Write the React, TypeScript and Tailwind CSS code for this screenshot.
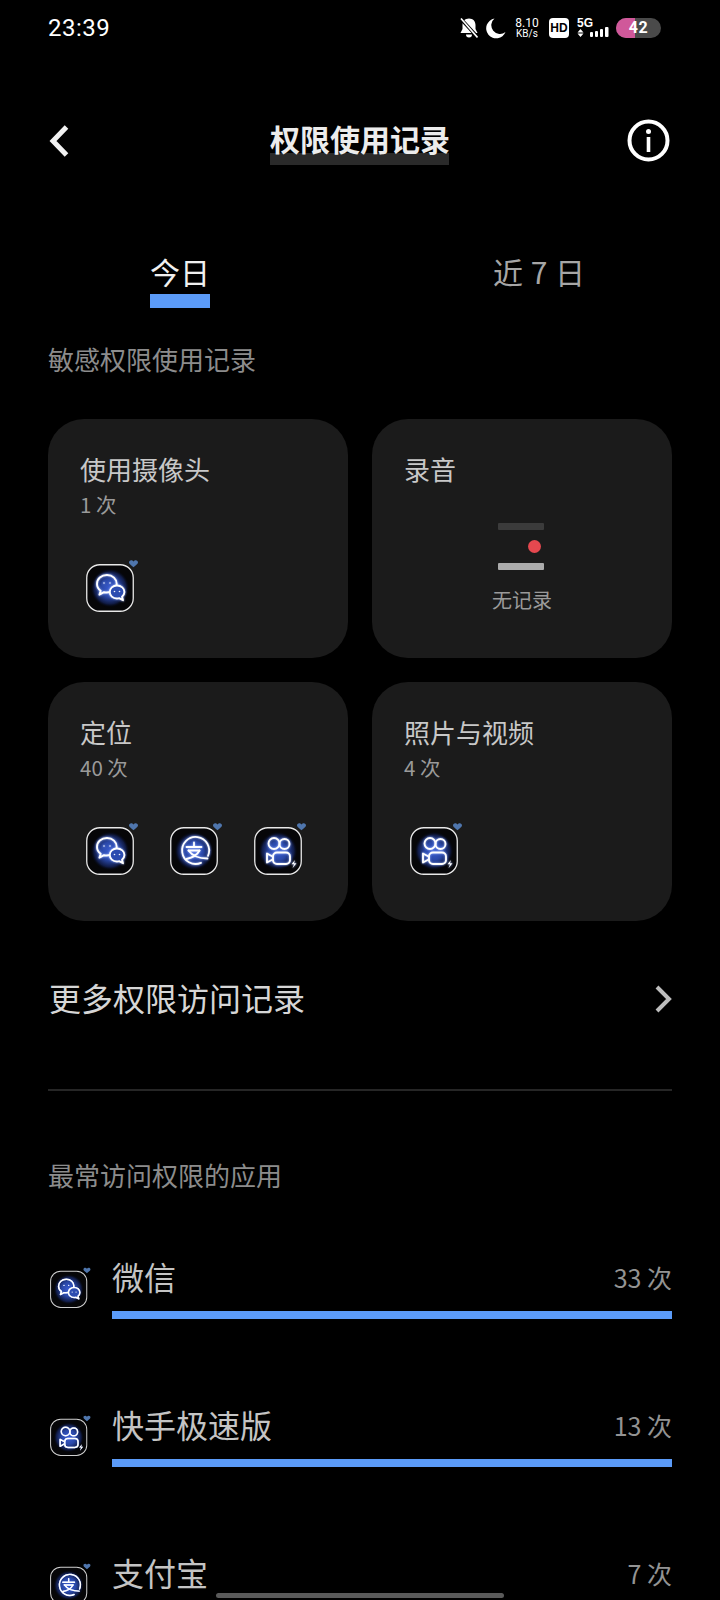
import React from 'react';

const cjk = { fontFamily: '"Noto Sans CJK SC", "Noto Sans", sans-serif' };

type AppKind = 'wechat' | 'alipay' | 'kuaishou';

// glyphs sit in a 48 unit box, stroked white over a blue glow
const AppGlyph = ({ kind }: { kind: AppKind }) => {
  if (kind === 'wechat') {
    return (
      <>
        <path d="M21 11c-5.700 0-10 3.900-10 8.900 0 2.800 1.400 5.200 3.700 6.800l-1.300 4 4.600-2.500c.9.200 1.800.3 2.700.3 5.700 0 10-3.900 10-8.700S26.700 11 21 11z" fill="none" stroke="#fff" strokeWidth="1.900" strokeLinejoin="round" />
        <path d="M31 21.500c-4.100 0-7.200 2.900-7.200 6.500s3.100 6.500 7.200 6.500c.8 0 1.500-.1 2.200-.3l3.800 2-1-3.400c1.500-1.200 2.400-2.900 2.400-4.800 0-3.600-3.300-6.500-7.400-6.500z" fill="#2c4cb0" stroke="#fff" strokeWidth="1.900" strokeLinejoin="round" />
        <circle cx="18" cy="19" r="0.800" fill="#eef3ff" />
        <circle cx="24" cy="19" r="0.800" fill="#eef3ff" />
        <circle cx="28.500" cy="27.500" r="0.800" fill="#eef3ff" />
        <circle cx="33.500" cy="27.500" r="0.800" fill="#eef3ff" />
      </>
    );
  }
  if (kind === 'alipay') {
    return (
      <>
        <path d="M31 35.800a13.500 13.500 0 1 1 7-7" fill="none" stroke="#fff" strokeWidth="1.800" strokeLinecap="round" />
        <path d="M16.500 20h15M24 15.500v4.500M29.500 23.500c-2 4-6 7-13 8.500M18.500 23.500c3.500 5 10 8 19 8" fill="none" stroke="#fff" strokeWidth="1.800" strokeLinecap="round" />
        <path d="M18.500 23.500h11" fill="none" stroke="#fff" strokeWidth="1.800" strokeLinecap="round" />
      </>
    );
  }
  return (
    <>
      <circle cx="20" cy="16.500" r="5.500" fill="none" stroke="#fff" strokeWidth="1.900" />
      <circle cx="30.500" cy="17" r="5" fill="none" stroke="#fff" strokeWidth="1.900" />
      <rect x="19" y="25.500" width="17" height="11.500" rx="4" fill="none" stroke="#fff" strokeWidth="1.900" />
      <path d="M18.500 29.500l-5.500-3v9l5.500-3" fill="none" stroke="#fff" strokeWidth="1.900" strokeLinejoin="round" />
      <path d="M41 33l-3.500 4.200h2.500l-1.500 4 4-5h-2.500z" fill="#fff" />
    </>
  );
};

const AppIcon = ({ kind, size = 48 }: { kind: AppKind; size?: number }) => (
  <svg width={size + 6} height={size + 6} viewBox="0 -6 54 54" className="block shrink-0">
    <defs>
      <radialGradient id={`glow-${kind}`} cx="50%" cy="50%" r="50%">
        <stop offset="0%" stopColor="#3a5cd0" />
        <stop offset="45%" stopColor="#2a48a8" />
        <stop offset="80%" stopColor="#101b45" />
        <stop offset="100%" stopColor="#000" stopOpacity="0" />
      </radialGradient>
    </defs>
    <rect x="0.750" y="0.750" width="46.500" height="46.500" rx="13" fill="#060608" stroke={size < 48 ? '#cfcfcf' : '#e8e8e8'} strokeWidth="1.300" />
    <circle cx="24" cy="24" r="20" fill={`url(#glow-${kind})`} />
    <g className="drop-shadow-[0_0_1px_#9db6ff]">
      <AppGlyph kind={kind} />
    </g>
    <path d="M47.500 -2.500c-1.500-2.400-4.800-1.300-4.500 1 .2 1.600 2.500 3.100 4.500 4.700 2-1.600 4.300-3.100 4.500-4.700.3-2.300-3-3.400-4.500-1z" fill="#4f76ad" />
  </svg>
);

const StatusBar = () => (
  <div className="h-[56px] pl-[48px] pr-[59px] flex items-center justify-between text-white">
    <span className="text-[24px] tracking-[0.5px]" style={{ fontFamily: 'Roboto, sans-serif' }}>23:39</span>
    <div className="flex items-center">
      {/* muted bell */}
      <svg width="18" height="20" viewBox="0 0 18 20">
        <path d="M9 0.500c-4 0-6.500 2.800-6.500 6.500v4L0.500 15h17l-2-4V7C15.500 3.300 13 .5 9 .5z" fill="#fff" />
        <path d="M6 16.500a3 3 0 0 0 6 0z" fill="#fff" />
        <path d="M0 0l18 19.500" stroke="#000" strokeWidth="3.500" />
        <path d="M1 0.500l16.500 19" stroke="#fff" strokeWidth="1.600" />
      </svg>
      {/* moon */}
      <svg width="21" height="21" viewBox="0 0 21 21" className="ml-[7px]">
        <path d="M9.500 0.500a10 10 0 1 0 11 13.500 8.500 8.500 0 0 1-11-13.500z" fill="#fff" />
      </svg>
      <div className="ml-[8px] w-[26px] flex flex-col items-center leading-none text-white" style={{ fontFamily: 'Roboto, sans-serif' }}>
        <span className="text-[12px] leading-[12px]">8.10</span>
        <span className="text-[10px] leading-[10px]">KB/s</span>
      </div>
      <div className="ml-[9px] w-[20px] h-[20px] rounded-[4px] bg-white flex items-center justify-center">
        <span className="text-[12px] font-bold text-black leading-none" style={{ fontFamily: '"Liberation Sans", sans-serif' }}>HD</span>
      </div>
      <div className="ml-[8px] flex flex-col w-[32px] h-[20px] relative">
        <span className="text-[12px] leading-[11px] font-bold" style={{ fontFamily: '"Liberation Sans", sans-serif' }}>5G</span>
        {/* data arrows and signal strength bars */}
        <svg width="32" height="20" viewBox="0 0 32 20" className="absolute left-0 top-0">
          <path d="M0.500 14.500l3-3.500 3 3.500zM0.500 15.500l3 3.500 3-3.500z" fill="#fff" />
          <rect x="13" y="14" width="3" height="5" rx="1" fill="#fff" />
          <rect x="18" y="13" width="3" height="6" rx="1" fill="#fff" />
          <rect x="23" y="11" width="3" height="8" rx="1" fill="#fff" />
          <rect x="28" y="9" width="3.500" height="10" rx="1" fill="#fff" />
        </svg>
      </div>
      <div className="ml-[7px] w-[45px] h-[20px] rounded-full bg-[#4a4a4a] overflow-hidden relative flex items-center justify-center">
        <div className="absolute left-0 top-0 bottom-0 w-[19px] bg-[#d0589a]" />
        <span className="relative text-[16px] font-bold text-white leading-none tracking-[0.5px]" style={{ fontFamily: 'Roboto, sans-serif' }}>42</span>
      </div>
    </div>
  </div>
);

const Header = () => (
  <div className="mt-[63px] h-[46px] pl-[48px] pr-[50px] flex items-center justify-between">
    <svg width="22" height="34" viewBox="0 0 22 34" className="-mt-[3px]">
      <path d="M18.500 3L5 17 18.500 31" fill="none" stroke="#f2f2f2" strokeWidth="5" />
    </svg>
    <h1 className="h-[46px] border-b-[12px] border-[#2a2a2a] text-[30px] leading-[38px] font-bold text-[#ececec] w-[179px] text-center whitespace-nowrap ml-[22px]">权限使用记录</h1>
    <svg width="43" height="43" viewBox="0 0 43 43" className="-mt-[4px]">
      <circle cx="21.500" cy="21.500" r="19" fill="none" stroke="#fff" strokeWidth="4" />
      <circle cx="21.500" cy="12.500" r="2.500" fill="#fff" />
      <rect x="19.700" y="18" width="3.600" height="15" fill="#fff" />
    </svg>
  </div>
);

const Tabs = () => (
  <div className="mt-[86px] flex pl-[150px]">
    <div className="w-[60px] flex flex-col">
      <span className="text-[30px] leading-[40px] text-[#f0f0f0] text-center whitespace-nowrap">今日</span>
      <div className="mt-[3px] h-[14px] bg-[#5b9bf8]" />
    </div>
    <span className="ml-[283px] text-[30px] leading-[40px] text-[#a6a6a6] whitespace-nowrap [word-spacing:1px]">近 7 日</span>
  </div>
);

const SectionLabel = ({ children, className }: { children: React.ReactNode; className: string }) => (
  <div className={`px-[48px] text-[26px] leading-[34px] text-[#8c8c8c] ${className}`}>{children}</div>
);

const PermissionCard = ({ title, count, apps }: { title: string; count: string; apps: AppKind[] }) => (
  <div className="h-[239px] rounded-[36px] bg-[#1b1b1b] pl-[32px] pt-[33px]">
    <div className="text-[26px] leading-[34px] text-[#c8c8c8]">{title}</div>
    <div className="mt-[4px] text-[20.500px] leading-[28px] text-[#9a9a9a]">{count}</div>
    <div className="mt-[40px] ml-[6px] flex gap-[30px]">
      {apps.map((kind) => (
        <AppIcon key={kind} kind={kind} />
      ))}
    </div>
  </div>
);

const RecordingCard = () => (
  <div className="h-[239px] rounded-[36px] bg-[#1b1b1b] pl-[32px] pt-[33px]">
    <div className="text-[26px] leading-[34px] text-[#c8c8c8]">录音</div>
    <div className="mt-[37px] ml-[94px] w-[46px]">
      <div className="h-[7px] rounded-[1px] bg-[#3b3b3b]" />
      <div className="mt-[10px] ml-[30px] w-[13px] h-[13px] rounded-full bg-[#e5484f]" />
      <div className="mt-[10px] h-[7px] rounded-[1px] bg-[#ababab]" />
    </div>
    <div className="mt-[16px] ml-[88px] text-[20px] leading-[28px] text-[#9a9a9a]">无记录</div>
  </div>
);

const AppRow = ({ kind, name, count, width }: { kind: AppKind; name: string; count: string; width: number }) => (
  <div className="h-[148px] flex pl-[50px] pr-[48px]">
    <div className="mt-[12px] w-[62px]">
      <AppIcon kind={kind} size={36} />
    </div>
    <div className="flex-1">
      <div className="flex items-center justify-between h-[44px]">
        <span className="text-[32px] leading-[44px] text-[#c4c4c4]">{name}</span>
        <span className="mt-[2px] text-[25px] leading-[44px] text-[#939393]">{count}</span>
      </div>
      <div className="mt-[13px] h-[8px] bg-[#5b9bf8]" style={{ width: `${width}%` }} />
    </div>
  </div>
);

export default function App() {
  return (
    <div className="relative w-[720px] h-[1600px] bg-black overflow-hidden" style={cjk}>
      <StatusBar />
      <Header />
      <Tabs />
      <SectionLabel className="mt-[34px]">敏感权限使用记录</SectionLabel>

      <div className="mt-[43px] px-[48px] grid grid-cols-[300px_300px] gap-x-[24px] gap-y-[24px]">
        <PermissionCard title="使用摄像头" count="1 次" apps={['wechat']} />
        <RecordingCard />
        <PermissionCard title="定位" count="40 次" apps={['wechat', 'alipay', 'kuaishou']} />
        <PermissionCard title="照片与视频" count="4 次" apps={['kuaishou']} />
      </div>

      <div className="mt-[52px] pl-[49px] pr-[46px] h-[48px] flex items-center justify-between">
        <span className="text-[32px] leading-[48px] text-[#d6d6d6]">更多权限访问记录</span>
        <svg width="20" height="28" viewBox="0 0 20 28" className="mt-[4px]">
          <path d="M3 2l12 12L3 26" fill="none" stroke="#bdbdbd" strokeWidth="4" />
        </svg>
      </div>

      <div className="mt-[68px] mx-[48px] h-[2px] bg-[#262626]" />

      <SectionLabel className="mt-[67px]">最常访问权限的应用</SectionLabel>

      <div className="mt-[62px]">
        <AppRow kind="wechat" name="微信" count="33 次" width={100} />
        <AppRow kind="kuaishou" name="快手极速版" count="13 次" width={100} />
        <AppRow kind="alipay" name="支付宝" count="7 次" width={100} />
      </div>

      {/* gesture bar */}
      <div className="absolute bottom-[2px] left-[216px] w-[288px] h-[5px] rounded-full bg-[#5a5a5a]" />
    </div>
  );
}
